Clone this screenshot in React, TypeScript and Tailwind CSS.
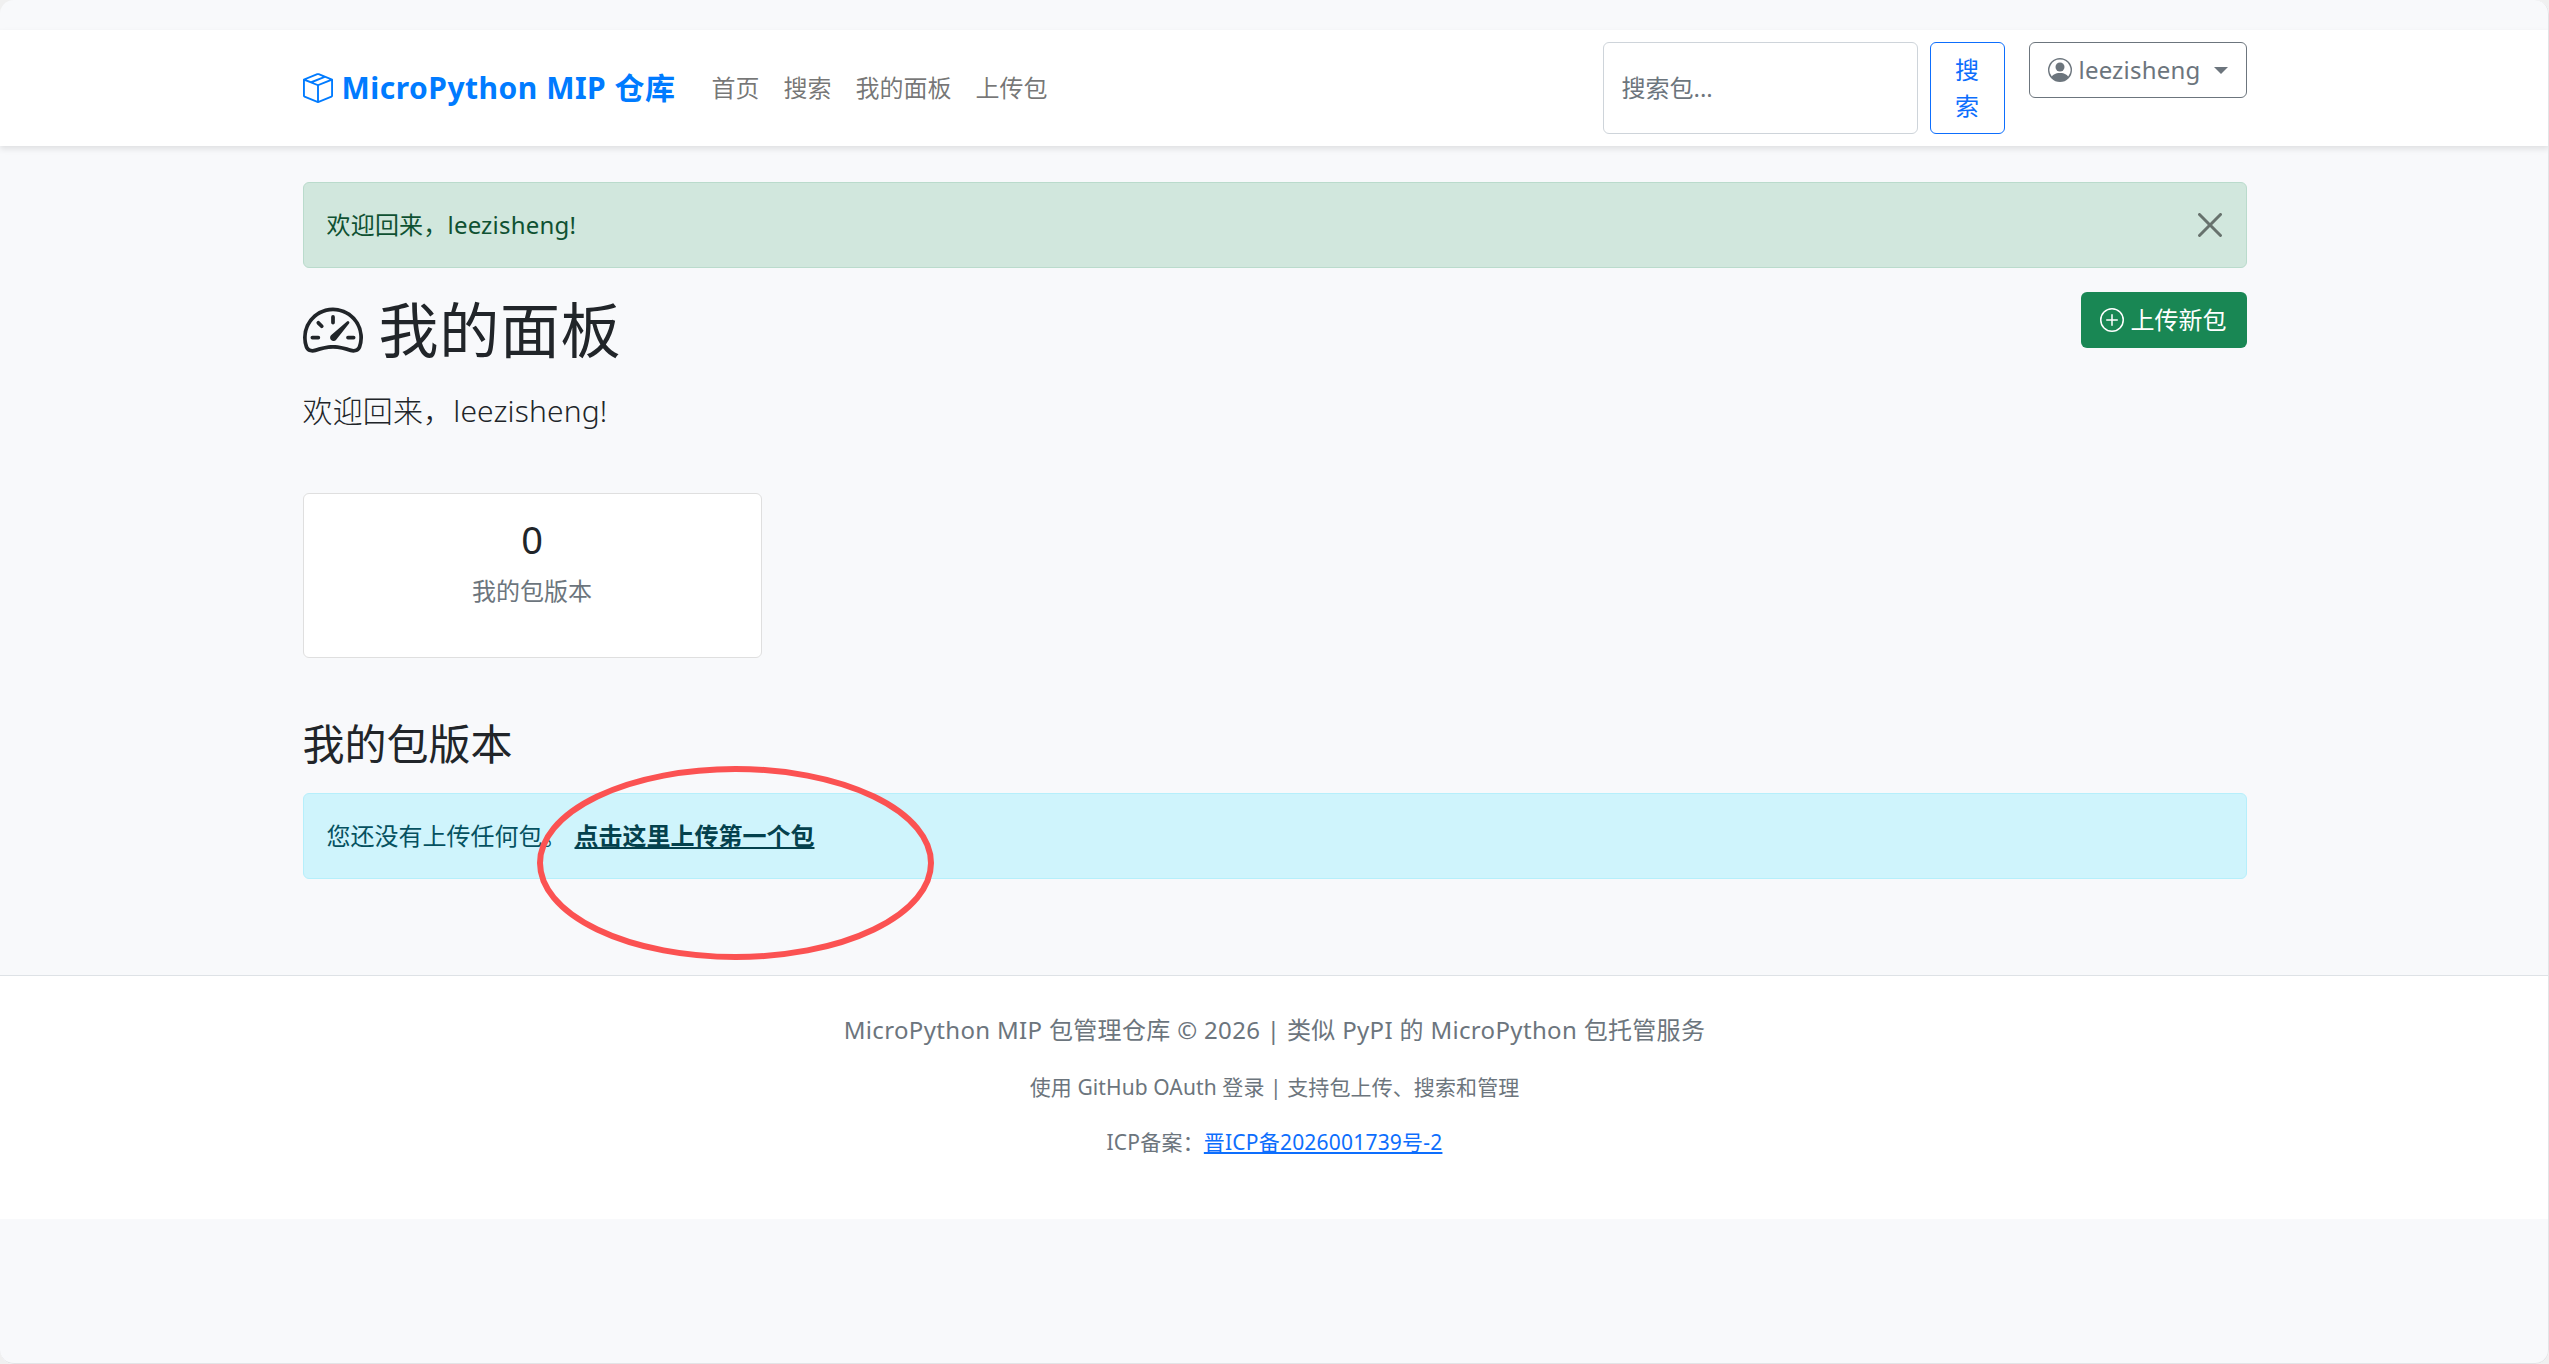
import { useState } from "react";
import { BsBoxSeam, BsPersonCircle, BsPlusCircle, BsSpeedometer2 } from "react-icons/bs";

const navLinks = ["首页", "搜索", "我的面板", "上传包"];

function Navbar({ user }: { user: string }) {
  const [keyword, setKeyword] = useState("");

  return (
    <nav className="h-[116px] bg-white py-3 shadow-[0_3px_6px_rgba(0,0,0,0.1)]">
      <div className="mx-auto flex h-full w-[1944px] items-center">
        <a href="#" className="mr-6 flex items-center text-[30px] font-bold text-[#007bff]">
          <BsBoxSeam className="mr-[9px] size-[30px]" />
          <span className="tracking-[0.5px] whitespace-nowrap">MicroPython MIP 仓库</span>
        </a>
        <ul className="flex">
          {navLinks.map((item) => (
            <li key={item} className="px-3 text-black/55">
              <a href="#">{item}</a>
            </li>
          ))}
        </ul>
        <form className="ml-auto flex h-[92px] gap-3" onSubmit={(e) => e.preventDefault()}>
          <input
            type="search"
            value={keyword}
            onChange={(e) => setKeyword(e.target.value)}
            placeholder="搜索包..."
            className="w-[315px] rounded-[6px] border border-[#ced4da] px-[18px] placeholder:text-[#6c757d]"
          />
          <button className="w-[75px] rounded-[6px] border border-[#0d6efd] px-[18px] text-[#0d6efd]">
            搜索
          </button>
        </form>
        <button className="ml-6 flex h-14 w-[218px] items-center self-start rounded-[6px] border border-[#6c757d] px-[18px] text-[#6c757d]">
          <BsPersonCircle className="mr-[7px] size-6" />
          <span className="tracking-[0.2px]">{user}</span>
          <span className="ml-auto border-x-[7px] border-t-[7px] border-x-transparent border-t-[#6c757d]" />
        </button>
      </div>
    </nav>
  );
}

function Footer() {
  return (
    <footer className="flex h-[244px] flex-col items-center border-t border-[#dee2e6] bg-white pt-9 text-[#6c757d]">
      <p className="mb-6 tracking-[0.33px]">MicroPython MIP 包管理仓库 © 2026 | 类似 PyPI 的 MicroPython 包托管服务</p>
      <p className="mb-[23px] text-[21px] leading-[31.5px] tracking-[0.1px]">
        使用 GitHub OAuth 登录 | 支持包上传、搜索和管理
      </p>
      <p className="text-[21px] leading-[31px] tracking-[0.2px]">
        ICP备案：
        <a href="#" className="text-[#0d6efd] underline">
          晋ICP备2026001739号-2
        </a>
      </p>
    </footer>
  );
}

export default function App() {
  const user = "leezisheng";
  const [showAlert, setShowAlert] = useState(true);

  return (
    <div className="h-[1364px] bg-[#f0f0f0]">
      <div className="relative h-full overflow-hidden rounded-[14px] bg-[#f8f9fb] pt-[30px] font-['Noto_Sans','Noto_Sans_CJK_SC',sans-serif] text-2xl leading-9 text-[#212529]">
        <Navbar user={user} />

        <main className="mx-auto mt-9 h-[793px] w-[1944px]">
          {showAlert && (
            <div className="mb-6 flex h-[86px] items-center justify-between rounded-[6px] border border-[#badbcc] bg-[#d1e7dd] pr-6 pl-[23px] text-[#0f5132]">
              <span className="tracking-[0.2px]">欢迎回来，{user}!</span>
              <button onClick={() => setShowAlert(false)} aria-label="Close" className="text-black opacity-50">
                <svg viewBox="0 0 16 16" fill="currentColor" className="size-6">
                  <path d="M.293.293a1 1 0 011.414 0L8 6.586 14.293.293a1 1 0 111.414 1.414L9.414 8l6.293 6.293a1 1 0 01-1.414 1.414L8 9.414l-6.293 6.293a1 1 0 01-1.414-1.414L6.586 8 .293 1.707a1 1 0 010-1.414z" />
                </svg>
              </button>
            </div>
          )}

          <div className="flex items-start justify-between">
            <h1 className="mb-[22px] flex items-center pt-0.5 text-[60px] leading-[72px] tracking-[0.7px]">
              <BsSpeedometer2 className="mr-4 size-[60px]" />
              我的面板
            </h1>
            <button className="flex h-14 w-[166px] items-center rounded-[6px] bg-[#198754] px-[19px] text-white">
              <BsPlusCircle className="mr-[7px] size-6 shrink-0" />
              <span className="whitespace-nowrap">上传新包</span>
            </button>
          </div>
          <p className="text-[30px] leading-[45px] font-light tracking-[0.15px]">欢迎回来，{user}!</p>

          <div className="mt-[60px] h-[165px] w-[459px] rounded-[6px] border border-[#dfdfdf] bg-white p-6 text-center">
            <h5 className="mb-3 text-[38px] leading-[43px]">0</h5>
            <p className="text-[#6c757d]">我的包版本</p>
          </div>

          <h3 className="mt-[61px] mb-6 text-[42px] leading-[50px]">我的包版本</h3>
          <div className="relative flex h-[86px] items-center rounded-[6px] border border-[#b6effb] bg-[#cff4fc] pr-6 pl-[23px] text-[#055160]">
            您还没有上传任何包。
            <a href="#" className="ml-2 font-bold text-[#04414d] underline">
              点击这里上传第一个包
            </a>
            {/* 手绘标注圈 */}
            <svg className="pointer-events-none absolute top-[-28px] left-[233px] h-[194px] w-[397px]" viewBox="0 0 397 194">
              <ellipse cx="198.5" cy="97" rx="195.5" ry="94" fill="none" stroke="#fb5252" strokeWidth="6" />
            </svg>
          </div>
        </main>

        <Footer />
        <div className="pointer-events-none absolute inset-0 rounded-[14px] border-r border-b border-[#e3e4e6]" />
      </div>
    </div>
  );
}
